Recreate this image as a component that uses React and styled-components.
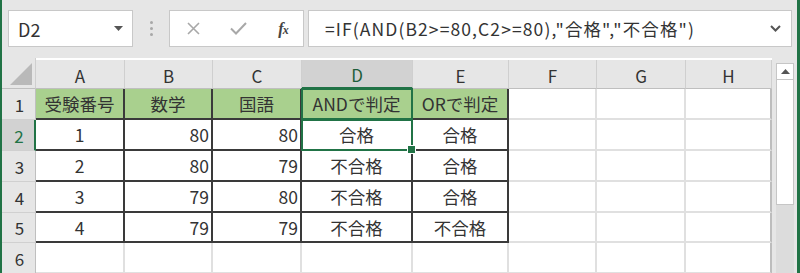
import React from "react";
import styled, { createGlobalStyle, css } from "styled-components";

const GREEN = "#217346";
const FONT = `"Noto Sans CJK JP", "Noto Sans", sans-serif`;

const Global = createGlobalStyle`
  html, body { margin: 0; padding: 0; background: #e6e6e6; }
  body { font-family: ${FONT}; color: #333; overflow: hidden; }
  * { box-sizing: border-box; }
`;

const Frame = styled.div`
  width: 800px;
  height: 273px;
  display: flex;
  overflow: hidden;
  border-left: 2px solid ${GREEN};
  border-right: 3px solid ${GREEN};
  background: #e6e6e6;
`;

const Main = styled.div`
  flex: 1;
  display: flex;
  flex-direction: column;
  min-width: 0;
`;

const Toolbar = styled.div`
  height: 58px;
  flex: none;
  display: flex;
  align-items: flex-start;
  padding: 10px 5px 0 6px;
`;

const Box = styled.div`
  height: 37px;
  background: #fff;
  border: 1px solid #c8c8c8;
  display: flex;
  align-items: center;
`;

const NameBox = styled(Box)`
  width: 125px;
  padding: 0 9px 0 9px;
  justify-content: space-between;
  font-size: 18px;
  color: #333;
`;

const Dots = styled.div`
  width: 3px;
  height: 37px;
  margin: 0 16px 0 17px;
  display: flex;
  flex-direction: column;
  justify-content: center;
  gap: 3px;
  span {
    width: 3px;
    height: 3px;
    border-radius: 50%;
    background: #a8a8a8;
  }
`;

const FuncBox = styled(Box)`
  width: 135px;
  padding: 0 0 0 16px;
  gap: 0;
`;

const IconSlot = styled.div`
  width: ${(p) => p.$w}px;
  display: flex;
  align-items: center;
  justify-content: center;
`;

const Fx = styled.span`
  font-family: "Liberation Serif", "DejaVu Serif", serif;
  font-style: italic;
  font-weight: bold;
  font-size: 16px;
  color: #444;
  letter-spacing: -1px;
  sub {
    font-size: 12px;
    vertical-align: baseline;
  }
`;

const FormulaBox = styled(Box)`
  flex: 1;
  margin-left: 4px;
  padding: 0 10px 0 16px;
  justify-content: space-between;
  font-size: 17.5px;
  letter-spacing: 1.1px;
  color: #333;
  white-space: nowrap;
`;

const SheetArea = styled.div`
  flex: 1;
  display: flex;
  min-height: 0;
`;

const Grid = styled.div`
  display: grid;
  grid-template-columns: 34px 89px 88px 89px 111px 96px 88px 89px 86px;
  grid-template-rows: 31px 31px 31px 31px 31px 30px 31px 30px;
  width: 770px;
  align-self: flex-start;
  background: #fff;
`;

const Corner = styled.div`
  background: #e6e6e6;
  border-right: 1px solid #cfcfcf;
  border-bottom: 1px solid #bfbfbf;
  display: flex;
  align-items: flex-end;
  justify-content: flex-end;
  padding: 0 3px 3px 0;
`;

const ColHead = styled.div`
  background: ${(p) => (p.$sel ? "#d2d2d2" : "#e6e6e6")};
  border-right: 1px solid #cfcfcf;
  border-bottom: ${(p) => (p.$sel ? `2px solid ${GREEN}` : "1px solid #bfbfbf")};
  color: ${(p) => (p.$sel ? "#1e5e3a" : "#333")};
  font-size: 17px;
  display: flex;
  align-items: center;
  justify-content: center;
  padding-top: 2px;
  margin-top: 2px;
`;

const RowHead = styled.div`
  background: ${(p) => (p.$sel ? "#d2d2d2" : "#e6e6e6")};
  border-right: ${(p) => (p.$sel ? `2px solid ${GREEN}` : "1px solid #bfbfbf")};
  border-bottom: 1px solid #d0d0d0;
  color: ${(p) => (p.$sel ? GREEN : "#333")};
  font-size: 17px;
  display: flex;
  align-items: center;
  justify-content: center;
  padding-left: 2px;
`;

const Cell = styled.div`
  position: relative;
  background: ${(p) => (p.$head ? "#a9d08e" : "#fff")};
  border-right: 2px solid ${(p) => (p.$table ? "#3a3a3a" : p.$edge ? "#bdbdbd" : "#e0e0e0")};
  border-bottom: 2px solid ${(p) => (p.$table ? "#3a3a3a" : "#e0e0e0")};
  font-size: 17.5px;
  color: #333;
  display: flex;
  align-items: center;
  justify-content: ${(p) => (p.$align === "right" ? "flex-end" : "center")};
  padding: 0 ${(p) => (p.$align === "right" ? "2px" : "0")} 0 0;
  white-space: nowrap;
  ${(p) =>
    p.$sel &&
    css`
      &::after {
        content: "";
        position: absolute;
        top: -1px;
        left: -1px;
        right: -2px;
        bottom: -2px;
        border: 2px solid ${GREEN};
        pointer-events: none;
        z-index: 1;
      }
    `}
  ${(p) =>
    p.$handle &&
    css`
      &::before {
        content: "";
        position: absolute;
        right: -5px;
        bottom: -5px;
        width: 7px;
        height: 7px;
        background: ${GREEN};
        border: 1px solid #fff;
        z-index: 2;
      }
    `}
`;

const ScrollCol = styled.div`
  width: 18px;
  margin-left: 4px;
  padding-top: 5px;
  display: flex;
  flex-direction: column;
`;

const ScrollBtn = styled.div`
  height: 17px;
  background: #fff;
  border: 1px solid #c6c6c6;
  display: flex;
  align-items: center;
  justify-content: center;
`;

const Thumb = styled.div`
  height: 125px;
  background: #fff;
  border: 1px solid #c6c6c6;
  border-top: none;
`;

const Track = styled.div`
  flex: 1;
  background: #dcdcdc;
`;

const COLS = [
  { k: "A", align: "center" },
  { k: "B", align: "right" },
  { k: "C", align: "right" },
  { k: "D", align: "center" },
  { k: "E", align: "center" },
  { k: "F" },
  { k: "G" },
  { k: "H" },
];

const DATA = [
  ["受験番号", "数学", "国語", "ANDで判定", "ORで判定"],
  ["1", "80", "80", "合格", "合格"],
  ["2", "80", "79", "不合格", "合格"],
  ["3", "79", "80", "不合格", "合格"],
  ["4", "79", "79", "不合格", "不合格"],
];

function Sheet() {
  const out = [];
  out.push(
    <Corner key="corner">
      <svg width="22" height="22" viewBox="0 0 22 22">
        <polygon points="22,0 22,22 0,22" fill="#b9b9b9" />
      </svg>
    </Corner>
  );
  COLS.forEach((c) =>
    out.push(
      <ColHead key={"h" + c.k} $sel={c.k === "D"}>
        {c.k}
      </ColHead>
    )
  );
  for (let r = 1; r <= 7; r++) {
    out.push(
      <RowHead key={"r" + r} $sel={r === 2}>
        {r <= 6 ? r : ""}
      </RowHead>
    );
    COLS.forEach((c, ci) => {
      const inTable = r <= 5 && ci < 5;
      const text = inTable ? DATA[r - 1][ci] : "";
      const align = r === 1 ? "center" : c.align;
      out.push(
        <Cell
          key={c.k + r}
          $table={inTable}
          $head={inTable && r === 1}
          $align={align}
          $edge={ci === 7}
          $sel={c.k === "D" && (r === 1 || r === 2)}
          $handle={c.k === "D" && r === 2}
        >
          {text}
        </Cell>
      );
    });
  }
  return <Grid>{out}</Grid>;
}

export default function App() {
  return (
    <>
      <Global />
      <Frame>
        <Main>
          <Toolbar>
            <NameBox>
              <span>D2</span>
              <svg width="9" height="5" viewBox="0 0 9 5">
                <polygon points="0,0 9,0 4.5,5" fill="#555" />
              </svg>
            </NameBox>
            <Dots>
              <span />
              <span />
              <span />
            </Dots>
            <FuncBox>
              <IconSlot $w={14}>
                <svg width="13" height="13" viewBox="0 0 13 13">
                  <path d="M1 1 L12 12 M12 1 L1 12" stroke="#a8a8a8" strokeWidth="1.6" fill="none" />
                </svg>
              </IconSlot>
              <IconSlot $w={76}>
                <svg width="17" height="13" viewBox="0 0 17 13">
                  <path d="M1 6.5 L6 11.5 L16 1" stroke="#a8a8a8" strokeWidth="2" fill="none" />
                </svg>
              </IconSlot>
              <IconSlot $w={14}>
                <Fx>
                  f<sub>x</sub>
                </Fx>
              </IconSlot>
            </FuncBox>
            <FormulaBox>
              <span>=IF(AND(B2&gt;=80,C2&gt;=80),"合格","不合格")</span>
              <svg width="11" height="7" viewBox="0 0 11 7">
                <path d="M1 1 L5.5 5.5 L10 1" stroke="#555" strokeWidth="2" fill="none" />
              </svg>
            </FormulaBox>
          </Toolbar>
          <SheetArea>
            <Sheet />
            <ScrollCol>
              <ScrollBtn>
                <svg width="9" height="5" viewBox="0 0 9 5">
                  <polygon points="0,5 9,5 4.5,0" fill="#555" />
                </svg>
              </ScrollBtn>
              <Thumb />
              <Track />
            </ScrollCol>
          </SheetArea>
        </Main>
      </Frame>
    </>
  );
}
